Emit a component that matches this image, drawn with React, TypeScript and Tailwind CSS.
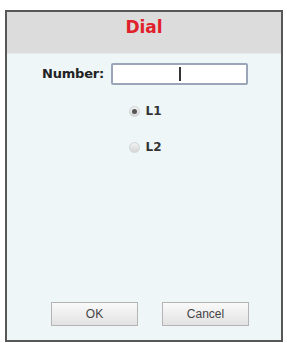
export default function App() {
  const lines = [
    { id: 'L1', checked: true },
    { id: 'L2', checked: false },
  ];

  return (
    <div className="w-[287px] h-[343px] bg-white pl-[5px] pt-[10px] font-['DejaVu_Sans',sans-serif]">
      <div className="w-[278px] h-[332px] border-2 border-[#575757] bg-[#eef6f8] flex flex-col">
        {/* Header */}
        <div className="h-[42px] bg-[#dcdcdc] border-b border-[#e6eaec] flex justify-center pt-[7px]">
          <span className="text-[17px] font-bold text-[#e0202a] leading-none">Dial</span>
        </div>

        {/* Number */}
        <div className="mt-[9px] flex items-center justify-center gap-[7px] pl-[2px]">
          <label className="text-[13px] font-bold text-[#222] tracking-[-0.2px]">Number:</label>
          <div className="w-[137px] h-[22px] bg-white border-2 border-[#9aa6b8] rounded-[2px] flex items-center pl-[66px]">
            <div className="w-[2px] h-[14px] bg-[#333]"></div>
          </div>
        </div>

        {/* Lines */}
        <div className="mt-[20px] flex flex-col items-center gap-[24px]">
          {lines.map((l) => (
            <div key={l.id} className="flex items-center gap-[6px] ml-[2px]">
              <span className="w-[11px] h-[11px] rounded-full border border-[#d0d4d6] bg-gradient-to-b from-[#f2f2f2] to-[#d6d6d6] flex items-center justify-center">
                {l.checked && <span className="w-[5px] h-[5px] rounded-full bg-[#555]"></span>}
              </span>
              <span className="text-[12px] font-bold text-[#333] leading-none">{l.id}</span>
            </div>
          ))}
        </div>

        {/* Buttons */}
        <div className="mt-auto mb-[14px] flex justify-center gap-[24px] pl-[12px]">
          <button className="w-[87px] h-[24px] border border-[#b4b4b4] bg-gradient-to-b from-[#fafafa] to-[#e2e2e2] text-[12px] text-[#444] font-['Liberation_Sans',sans-serif]">
            OK
          </button>
          <button className="w-[87px] h-[24px] border border-[#b4b4b4] bg-gradient-to-b from-[#fafafa] to-[#e2e2e2] text-[12px] text-[#444] font-['Liberation_Sans',sans-serif]">
            Cancel
          </button>
        </div>
      </div>
    </div>
  );
}
